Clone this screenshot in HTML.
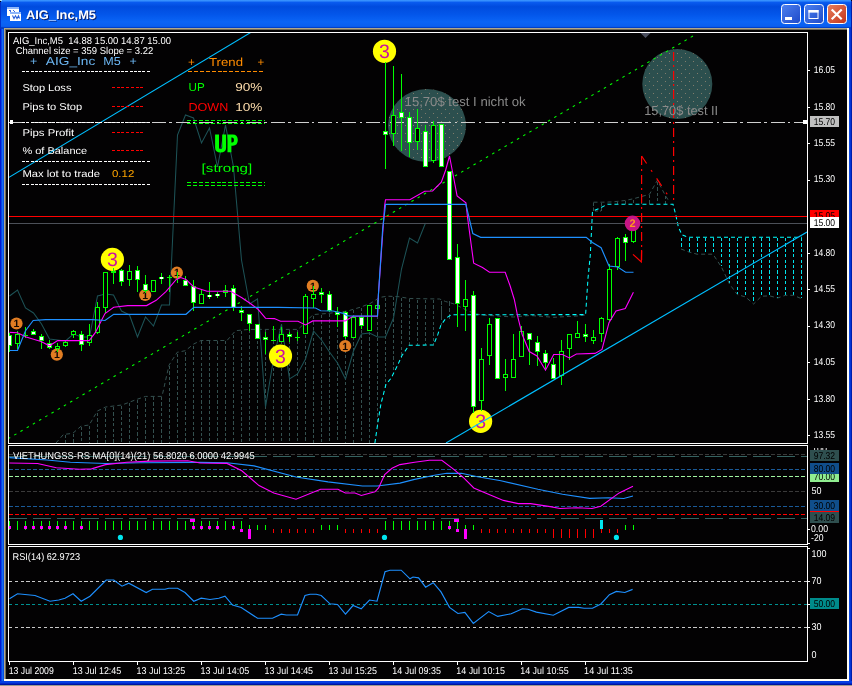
<!DOCTYPE html><html><head><meta charset="utf-8"><title>AIG_Inc,M5</title>
<style>html,body{margin:0;padding:0;background:#000;overflow:hidden}svg{display:block;will-change:transform}text{font-family:"Liberation Sans",sans-serif;white-space:pre;text-rendering:geometricPrecision}</style></head><body>
<svg width="852" height="686" viewBox="0 0 852 686">
<defs>
<linearGradient id="tb" x1="0" y1="0" x2="0" y2="1">
<stop offset="0" stop-color="#3a96ff"/><stop offset="0.04" stop-color="#2f88fb"/><stop offset="0.07" stop-color="#0a5cf0"/><stop offset="0.23" stop-color="#004bde"/><stop offset="0.5" stop-color="#0356ea"/><stop offset="0.75" stop-color="#0a64f6"/><stop offset="0.91" stop-color="#0a5ff0"/><stop offset="0.95" stop-color="#0040c8"/><stop offset="1" stop-color="#003cc0"/>
</linearGradient>
<linearGradient id="bb" x1="0" y1="0" x2="1" y2="1"><stop offset="0" stop-color="#4e82f0"/><stop offset="1" stop-color="#1d49c8"/></linearGradient>
<linearGradient id="cb" x1="0" y1="0" x2="1" y2="1"><stop offset="0" stop-color="#e8805e"/><stop offset="1" stop-color="#c2331a"/></linearGradient>
<pattern id="dots" width="8" height="8" patternUnits="userSpaceOnUse"><rect width="8" height="8" fill="#2c4f4e"/><rect x="1" y="1" width="1" height="1" fill="#807c6c"/><rect x="5" y="5" width="1" height="1" fill="#807c6c"/></pattern>
<clipPath id="cm"><rect x="9" y="33" width="798" height="410"/></clipPath>
<clipPath id="c1"><rect x="9" y="446" width="798" height="98"/></clipPath>
<clipPath id="clip100"><rect x="808" y="448" width="40" height="2.2"/></clipPath>
<clipPath id="c2"><rect x="9" y="547" width="798" height="114"/></clipPath>
</defs>
<rect x="0" y="0" width="852" height="686" fill="#0a50e2" />
<rect x="0" y="0" width="852" height="29" fill="url(#tb)" />
<rect x="0" y="29" width="1" height="686" fill="#0019cf" />
<rect x="1" y="29" width="1" height="686" fill="#0a44e4" />
<rect x="2" y="29" width="1" height="686" fill="#166cee" />
<rect x="3" y="29" width="1" height="686" fill="#0850e0" />
<rect x="0" y="0" width="1" height="29" fill="#0030c8" />
<rect x="849" y="29" width="1" height="686" fill="#0846e6" />
<rect x="850" y="29" width="1" height="686" fill="#0536d6" />
<rect x="851" y="0" width="1" height="686" fill="#001eaa" />
<rect x="0" y="681" width="852" height="2" fill="#063ee2" />
<rect x="0" y="683" width="852" height="1" fill="#0028c8" />
<rect x="0" y="684" width="852" height="1" fill="#0014a0" />
<rect x="0" y="685" width="852" height="1" fill="#9c9c90" />
<rect x="0" y="0" width="2" height="1" fill="#a8d8f8" />
<rect x="0" y="1" width="1" height="1" fill="#000820" />
<rect x="851" y="0" width="1" height="1" fill="#000010" />
<rect x="4" y="28" width="845" height="653" fill="#fffdf4" />
<rect x="4" y="28" width="843" height="651" fill="#b0a78c" />
<rect x="5" y="29" width="842" height="650" fill="#6e6856" />
<rect x="6" y="30" width="841" height="649" fill="#030203" />
<g shape-rendering="crispEdges">
<rect x="7" y="7" width="12" height="9" fill="#ffffff" />
<rect x="7" y="7" width="12" height="2" fill="#8fb6fa" />
<rect x="9" y="10" width="2" height="1" fill="#3a6be0" />
<rect x="10" y="11" width="1" height="1" fill="#3a6be0" />
<rect x="13" y="10" width="1" height="1" fill="#3a6be0" />
<rect x="14" y="11" width="1" height="1" fill="#3a6be0" />
<rect x="10" y="12" width="11" height="9" fill="#ffffff" />
<rect x="10" y="12" width="11" height="2" fill="#8fb6fa" />
</g>
<path d="M12.5 15.5 L14 18.5 L15.5 15.8 L17 18.6 L18.5 15.8 L19.5 18.5" stroke="#2a5fd8" stroke-width="1.1" fill="none"/>
<text x="27" y="20" font-size="12.5" fill="#0a1f66" textLength="70" lengthAdjust="spacingAndGlyphs" font-weight="bold" >AIG_Inc,M5</text>
<text x="26" y="19" font-size="12.5" fill="#ffffff" textLength="70" lengthAdjust="spacingAndGlyphs" font-weight="bold" >AIG_Inc,M5</text>
<rect x="781.5" y="4.5" width="19" height="19" rx="3" ry="3" fill="url(#bb)" stroke="#ffffff" stroke-width="1"/>
<rect x="804.5" y="4.5" width="19" height="19" rx="3" ry="3" fill="url(#bb)" stroke="#ffffff" stroke-width="1"/>
<rect x="827.5" y="4.5" width="19" height="19" rx="3" ry="3" fill="url(#cb)" stroke="#ffffff" stroke-width="1"/>
<rect x="785" y="17" width="7" height="3" fill="#fff" />
<rect x="809" y="10.5" width="9" height="8" fill="none" stroke="#fff" stroke-width="1"/>
<rect x="808.5" y="10" width="10" height="2.6" fill="#fff" />
<path d="M831.7 9.5 L841.7 19.3 M841.7 9.5 L831.7 19.3" stroke="#fff" stroke-width="2.2" fill="none"/>
<g shape-rendering="crispEdges" fill="none" stroke="#ffffff" stroke-width="1">
<rect x="8.5" y="32.5" width="799" height="411"/>
<rect x="8.5" y="445.5" width="799" height="99"/>
<rect x="8.5" y="546.5" width="799" height="115"/>
</g>
<g clip-path="url(#cm)">
<g shape-rendering="crispEdges">
<line x1="65.5" y1="435" x2="65.5" y2="443" stroke="#34504f" stroke-width="1" stroke-dasharray="3.2 2.2" />
<line x1="73.5" y1="434" x2="73.5" y2="443" stroke="#34504f" stroke-width="1" stroke-dasharray="3.2 2.2" />
<line x1="81.5" y1="427" x2="81.5" y2="443" stroke="#34504f" stroke-width="1" stroke-dasharray="3.2 2.2" />
<line x1="89.5" y1="426" x2="89.5" y2="443" stroke="#34504f" stroke-width="1" stroke-dasharray="3.2 2.2" />
<line x1="97.5" y1="413" x2="97.5" y2="443" stroke="#34504f" stroke-width="1" stroke-dasharray="3.2 2.2" />
<line x1="105.5" y1="408" x2="105.5" y2="443" stroke="#34504f" stroke-width="1" stroke-dasharray="3.2 2.2" />
<line x1="113.5" y1="407" x2="113.5" y2="443" stroke="#34504f" stroke-width="1" stroke-dasharray="3.2 2.2" />
<line x1="121.5" y1="406" x2="121.5" y2="443" stroke="#34504f" stroke-width="1" stroke-dasharray="3.2 2.2" />
<line x1="129.5" y1="403" x2="129.5" y2="443" stroke="#34504f" stroke-width="1" stroke-dasharray="3.2 2.2" />
<line x1="137.5" y1="400" x2="137.5" y2="443" stroke="#34504f" stroke-width="1" stroke-dasharray="3.2 2.2" />
<line x1="145.5" y1="398" x2="145.5" y2="443" stroke="#34504f" stroke-width="1" stroke-dasharray="3.2 2.2" />
<line x1="153.5" y1="397" x2="153.5" y2="443" stroke="#34504f" stroke-width="1" stroke-dasharray="3.2 2.2" />
<line x1="161.5" y1="397" x2="161.5" y2="443" stroke="#34504f" stroke-width="1" stroke-dasharray="3.2 2.2" />
<line x1="169.5" y1="366" x2="169.5" y2="443" stroke="#34504f" stroke-width="1" stroke-dasharray="3.2 2.2" />
<line x1="177.5" y1="354" x2="177.5" y2="443" stroke="#34504f" stroke-width="1" stroke-dasharray="3.2 2.2" />
<line x1="185.5" y1="352" x2="185.5" y2="443" stroke="#34504f" stroke-width="1" stroke-dasharray="3.2 2.2" />
<line x1="193.5" y1="346" x2="193.5" y2="443" stroke="#34504f" stroke-width="1" stroke-dasharray="3.2 2.2" />
<line x1="201.5" y1="341" x2="201.5" y2="443" stroke="#34504f" stroke-width="1" stroke-dasharray="3.2 2.2" />
<line x1="209.5" y1="341" x2="209.5" y2="443" stroke="#34504f" stroke-width="1" stroke-dasharray="3.2 2.2" />
<line x1="217.5" y1="341" x2="217.5" y2="443" stroke="#34504f" stroke-width="1" stroke-dasharray="3.2 2.2" />
<line x1="225.5" y1="341" x2="225.5" y2="443" stroke="#34504f" stroke-width="1" stroke-dasharray="3.2 2.2" />
<line x1="233.5" y1="335" x2="233.5" y2="443" stroke="#34504f" stroke-width="1" stroke-dasharray="3.2 2.2" />
<line x1="241.5" y1="331" x2="241.5" y2="443" stroke="#34504f" stroke-width="1" stroke-dasharray="3.2 2.2" />
<line x1="249.5" y1="330" x2="249.5" y2="443" stroke="#34504f" stroke-width="1" stroke-dasharray="3.2 2.2" />
<line x1="257.5" y1="330" x2="257.5" y2="443" stroke="#34504f" stroke-width="1" stroke-dasharray="3.2 2.2" />
<line x1="265.5" y1="330" x2="265.5" y2="443" stroke="#34504f" stroke-width="1" stroke-dasharray="3.2 2.2" />
<line x1="273.5" y1="330" x2="273.5" y2="443" stroke="#34504f" stroke-width="1" stroke-dasharray="3.2 2.2" />
<line x1="281.5" y1="330" x2="281.5" y2="443" stroke="#34504f" stroke-width="1" stroke-dasharray="3.2 2.2" />
<line x1="289.5" y1="330" x2="289.5" y2="443" stroke="#34504f" stroke-width="1" stroke-dasharray="3.2 2.2" />
<line x1="297.5" y1="330" x2="297.5" y2="443" stroke="#34504f" stroke-width="1" stroke-dasharray="3.2 2.2" />
<line x1="305.5" y1="324" x2="305.5" y2="443" stroke="#34504f" stroke-width="1" stroke-dasharray="3.2 2.2" />
<line x1="313.5" y1="316" x2="313.5" y2="443" stroke="#34504f" stroke-width="1" stroke-dasharray="3.2 2.2" />
<line x1="321.5" y1="315" x2="321.5" y2="443" stroke="#34504f" stroke-width="1" stroke-dasharray="3.2 2.2" />
<line x1="329.5" y1="314" x2="329.5" y2="443" stroke="#34504f" stroke-width="1" stroke-dasharray="3.2 2.2" />
<line x1="337.5" y1="313" x2="337.5" y2="443" stroke="#34504f" stroke-width="1" stroke-dasharray="3.2 2.2" />
<line x1="345.5" y1="312" x2="345.5" y2="443" stroke="#34504f" stroke-width="1" stroke-dasharray="3.2 2.2" />
<line x1="353.5" y1="310" x2="353.5" y2="443" stroke="#34504f" stroke-width="1" stroke-dasharray="3.2 2.2" />
<line x1="361.5" y1="308" x2="361.5" y2="443" stroke="#34504f" stroke-width="1" stroke-dasharray="3.2 2.2" />
<line x1="369.5" y1="305" x2="369.5" y2="443" stroke="#34504f" stroke-width="1" stroke-dasharray="3.2 2.2" />
<line x1="377.5" y1="300" x2="377.5" y2="429" stroke="#34504f" stroke-width="1" stroke-dasharray="3.2 2.2" />
<line x1="385.5" y1="298" x2="385.5" y2="388" stroke="#34504f" stroke-width="1" stroke-dasharray="3.2 2.2" />
<line x1="393.5" y1="297" x2="393.5" y2="374" stroke="#34504f" stroke-width="1" stroke-dasharray="3.2 2.2" />
<line x1="401.5" y1="298" x2="401.5" y2="358" stroke="#34504f" stroke-width="1" stroke-dasharray="3.2 2.2" />
<line x1="409.5" y1="299" x2="409.5" y2="345" stroke="#34504f" stroke-width="1" stroke-dasharray="3.2 2.2" />
<line x1="417.5" y1="300" x2="417.5" y2="345" stroke="#34504f" stroke-width="1" stroke-dasharray="3.2 2.2" />
<line x1="425.5" y1="300" x2="425.5" y2="345" stroke="#34504f" stroke-width="1" stroke-dasharray="3.2 2.2" />
<line x1="433.5" y1="300" x2="433.5" y2="345" stroke="#34504f" stroke-width="1" stroke-dasharray="3.2 2.2" />
<line x1="441.5" y1="301" x2="441.5" y2="325" stroke="#34504f" stroke-width="1" stroke-dasharray="3.2 2.2" />
<line x1="449.5" y1="303" x2="449.5" y2="316" stroke="#34504f" stroke-width="1" stroke-dasharray="3.2 2.2" />
<line x1="457.5" y1="306" x2="457.5" y2="315" stroke="#34504f" stroke-width="1" stroke-dasharray="3.2 2.2" />
<line x1="465.5" y1="310" x2="465.5" y2="315" stroke="#34504f" stroke-width="1" stroke-dasharray="3.2 2.2" />
<line x1="473.5" y1="314" x2="473.5" y2="315" stroke="#34504f" stroke-width="1" stroke-dasharray="3.2 2.2" />
<line x1="441.5" y1="301" x2="441.5" y2="320" stroke="#34504f" stroke-width="1" stroke-dasharray="4 3" />
<line x1="449.5" y1="301" x2="449.5" y2="320" stroke="#34504f" stroke-width="1" stroke-dasharray="4 3" />
<line x1="617.5" y1="202" x2="617.5" y2="204" stroke="#34504f" stroke-width="1" stroke-dasharray="3.2 2.2" />
<line x1="625.5" y1="201" x2="625.5" y2="204" stroke="#34504f" stroke-width="1" stroke-dasharray="3.2 2.2" />
<line x1="633.5" y1="200" x2="633.5" y2="204" stroke="#34504f" stroke-width="1" stroke-dasharray="3.2 2.2" />
<line x1="641.5" y1="198" x2="641.5" y2="204" stroke="#34504f" stroke-width="1" stroke-dasharray="3.2 2.2" />
<line x1="649.5" y1="195" x2="649.5" y2="204" stroke="#34504f" stroke-width="1" stroke-dasharray="3.2 2.2" />
<line x1="657.5" y1="182" x2="657.5" y2="204" stroke="#34504f" stroke-width="1" stroke-dasharray="3.2 2.2" />
<line x1="665.5" y1="196" x2="665.5" y2="204" stroke="#34504f" stroke-width="1" stroke-dasharray="3.2 2.2" />
<line x1="593.5" y1="203" x2="593.5" y2="211" stroke="#34504f" stroke-width="1" stroke-dasharray="3 2" />
<line x1="601.5" y1="203" x2="601.5" y2="211" stroke="#34504f" stroke-width="1" stroke-dasharray="3 2" />
<line x1="681.5" y1="238" x2="681.5" y2="249" stroke="#00e5ee" stroke-width="1" stroke-dasharray="3.2 2.2" />
<line x1="689.5" y1="238" x2="689.5" y2="252" stroke="#00e5ee" stroke-width="1" stroke-dasharray="3.2 2.2" />
<line x1="697.5" y1="238" x2="697.5" y2="254" stroke="#00e5ee" stroke-width="1" stroke-dasharray="3.2 2.2" />
<line x1="705.5" y1="238" x2="705.5" y2="254" stroke="#00e5ee" stroke-width="1" stroke-dasharray="3.2 2.2" />
<line x1="713.5" y1="238" x2="713.5" y2="254" stroke="#00e5ee" stroke-width="1" stroke-dasharray="3.2 2.2" />
<line x1="721.5" y1="238" x2="721.5" y2="266" stroke="#00e5ee" stroke-width="1" stroke-dasharray="3.2 2.2" />
<line x1="729.5" y1="238" x2="729.5" y2="283" stroke="#00e5ee" stroke-width="1" stroke-dasharray="3.2 2.2" />
<line x1="737.5" y1="238" x2="737.5" y2="294" stroke="#00e5ee" stroke-width="1" stroke-dasharray="3.2 2.2" />
<line x1="745.5" y1="238" x2="745.5" y2="297" stroke="#00e5ee" stroke-width="1" stroke-dasharray="3.2 2.2" />
<line x1="753.5" y1="238" x2="753.5" y2="303" stroke="#00e5ee" stroke-width="1" stroke-dasharray="3.2 2.2" />
<line x1="761.5" y1="238" x2="761.5" y2="297" stroke="#00e5ee" stroke-width="1" stroke-dasharray="3.2 2.2" />
<line x1="769.5" y1="238" x2="769.5" y2="296" stroke="#00e5ee" stroke-width="1" stroke-dasharray="3.2 2.2" />
<line x1="777.5" y1="238" x2="777.5" y2="298" stroke="#00e5ee" stroke-width="1" stroke-dasharray="3.2 2.2" />
<line x1="785.5" y1="238" x2="785.5" y2="295" stroke="#00e5ee" stroke-width="1" stroke-dasharray="3.2 2.2" />
<line x1="793.5" y1="238" x2="793.5" y2="295" stroke="#00e5ee" stroke-width="1" stroke-dasharray="3.2 2.2" />
<line x1="801.5" y1="238" x2="801.5" y2="298" stroke="#00e5ee" stroke-width="1" stroke-dasharray="3.2 2.2" />
</g>
<polyline points="56.0,443.0 63.4,434.5 72.8,433.3 81.0,426.2 89.2,425.0 97.4,411.0 105.6,407.0 122.0,405.0 137.3,399.2 145.5,396.4 162.0,396.4 169.0,365.2 177.2,352.3 185.4,350.7 193.7,344.0 201.0,340.5 227.0,340.5 235.6,330.7 249.0,329.4 298.0,329.4 305.9,322.0 313.0,314.6 328.0,313.4 337.9,312.2 347.7,311.0 360.0,307.3 370.0,303.6 379.8,297.4 387.2,296.2 398.0,296.6 409.3,298.5 439.6,299.0 445.3,301.4 454.8,304.2 466.2,310.0 473.7,313.3 482.0,315.0 513.5,317.0 530.0,315.5 553.7,317.3 577.0,316.0 585.0,315.0" fill="none" stroke="#34504f" stroke-width="1" stroke-dasharray="4 3" />
<polyline points="593.5,202.2 602.2,202.2 612.7,201.9 625.0,200.5 633.7,198.7 649.5,194.3 657.3,180.3 665.2,195.2 669.6,202.2" fill="none" stroke="#34504f" stroke-width="1" stroke-dasharray="4 3" />
<polyline points="593.5,202.5 593.5,211.0 601.0,211.0" fill="none" stroke="#34504f" stroke-width="1" stroke-dasharray="3 2" />
<polyline points="681.0,249.0 689.0,252.0 697.0,254.2 713.0,254.2 721.6,267.3 729.5,284.0 737.3,294.5 745.6,297.0 753.6,304.0 761.5,296.2 769.7,295.9 777.6,298.0 785.4,295.3 793.6,295.3 801.7,298.8" fill="none" stroke="#34504f" stroke-width="1" stroke-dasharray="4 3" />
<polyline points="374.9,443.0 378.5,418.4 381.0,403.6 385.9,384.6 391.1,378.2 397.5,365.5 401.7,356.0 409.1,345.3 433.4,345.0 437.7,334.9 440.8,325.4 446.1,318.0 451.4,314.8 585.6,314.6 588.0,278.3 590.3,255.0 592.4,212.7 593.0,211.0 600.0,208.0 607.5,204.3 673.0,204.3 675.7,214.5 678.3,226.7 681.8,234.6 688.0,237.3 802.0,237.3" fill="none" stroke="#00ffff" stroke-width="1.05" stroke-dasharray="4 3" />
<polyline points="9.5,296.0 17.5,290.0 25.5,308.0 33.5,313.0 41.5,324.0 49.5,339.0 57.5,340.0 65.5,341.0 73.5,334.0 81.5,337.0 89.5,337.0 97.5,296.0 105.5,294.0 113.5,295.0 121.5,311.0 129.5,315.0 137.5,337.0 145.5,317.0 153.5,326.0 161.5,305.0 169.5,305.0 177.5,135.0 185.5,115.0 193.5,118.0 201.5,143.0 209.5,128.0 217.5,167.0 225.5,125.0 233.5,167.0 241.5,260.0 249.5,304.0 257.5,299.0 265.5,407.0 273.5,359.0 281.5,324.0 289.5,379.0 297.5,374.0 305.5,359.0 313.5,331.0 321.5,340.0 329.5,352.0 337.5,363.0 345.5,379.0 353.5,351.0 361.5,334.0 369.5,333.0 377.5,337.0 385.5,337.0 393.5,318.0 401.5,269.0 409.5,238.0 417.5,243.0 425.5,223.0" fill="none" stroke="#1d5256" stroke-width="1.05" />
<ellipse cx="427" cy="125.5" rx="39" ry="36.5" fill="url(#dots)"/>
<ellipse cx="677.3" cy="84" rx="35" ry="35" fill="url(#dots)"/>
<g shape-rendering="crispEdges">
<line x1="9" y1="122.5" x2="807" y2="122.5" stroke="#d0d0d0" stroke-width="1" stroke-dasharray="14 3.4 2.4 4" />
<line x1="9" y1="216.5" x2="807" y2="216.5" stroke="#ff0000" stroke-width="1.3" />
<line x1="9" y1="223.5" x2="807" y2="223.5" stroke="#4c5058" stroke-width="1" />
</g>
<rect x="10" y="120" width="3" height="4" fill="#ffffff" />
<rect x="803" y="120" width="4" height="4" fill="#ffffff" />
<line x1="8" y1="438.8" x2="695.2" y2="34.7" stroke="#00ff00" stroke-width="1.05" stroke-dasharray="2.6 4.6" />
<line x1="9" y1="177.4" x2="252" y2="31.7" stroke="#00bfff" stroke-width="1.1" />
<line x1="673.6" y1="52" x2="673.6" y2="204" stroke="#ff0000" stroke-width="1.2" stroke-dasharray="9 4 2 4" />
<line x1="641.6" y1="156" x2="641.6" y2="262" stroke="#ff0000" stroke-width="1.2" stroke-dasharray="9 4 2 4" />
<line x1="641.6" y1="156" x2="669.6" y2="197.8" stroke="#ff0000" stroke-width="1.2" stroke-dasharray="9 8 2 8" />
<polyline points="633.0,254.4 641.3,262.0 641.6,250.0" fill="none" stroke="#ff0000" stroke-width="1.2" />
<circle cx="16.5" cy="323.5" r="6.1" fill="#e17d23"/>
<text x="16.5" y="327.2" font-size="10.5" fill="#140800" font-weight="bold" text-anchor="middle" >1</text>
<circle cx="56.8" cy="354.6" r="6.1" fill="#e17d23"/>
<text x="56.8" y="358.3" font-size="10.5" fill="#140800" font-weight="bold" text-anchor="middle" >1</text>
<circle cx="145.2" cy="295" r="6.1" fill="#e17d23"/>
<text x="145.2" y="298.7" font-size="10.5" fill="#140800" font-weight="bold" text-anchor="middle" >1</text>
<circle cx="176.9" cy="272.7" r="6.1" fill="#e17d23"/>
<text x="176.9" y="276.4" font-size="10.5" fill="#140800" font-weight="bold" text-anchor="middle" >1</text>
<circle cx="312.8" cy="285.9" r="6.1" fill="#e17d23"/>
<text x="312.8" y="289.59999999999997" font-size="10.5" fill="#140800" font-weight="bold" text-anchor="middle" >1</text>
<circle cx="345.2" cy="346" r="6.1" fill="#e17d23"/>
<text x="345.2" y="349.7" font-size="10.5" fill="#140800" font-weight="bold" text-anchor="middle" >1</text>
<circle cx="112.4" cy="259.4" r="11.6" fill="#ffff00"/>
<text x="112.4" y="266.4" font-size="19.5" fill="#cc10a0" text-anchor="middle" >3</text>
<circle cx="280.5" cy="356" r="11.6" fill="#ffff00"/>
<text x="280.5" y="363" font-size="19.5" fill="#cc10a0" text-anchor="middle" >3</text>
<circle cx="384.5" cy="51.3" r="11.6" fill="#ffff00"/>
<text x="384.5" y="58.3" font-size="19.5" fill="#cc10a0" text-anchor="middle" >3</text>
<circle cx="480.6" cy="421.3" r="11.6" fill="#ffff00"/>
<text x="480.6" y="428.3" font-size="19.5" fill="#cc10a0" text-anchor="middle" >3</text>
<g shape-rendering="crispEdges">
<rect x="9" y="333" width="1" height="19" fill="#00ff00" />
<rect x="7" y="335" width="5" height="11" fill="#00ff00" />
<rect x="8" y="336" width="3" height="9" fill="#ffffff" />
<rect x="17" y="331" width="1" height="18" fill="#00ff00" />
<rect x="15" y="334" width="5" height="10" fill="#00ff00" />
<rect x="16" y="335" width="3" height="8" fill="#000000" />
<rect x="25" y="327" width="1" height="11" fill="#00ff00" />
<rect x="23" y="335" width="5" height="1" fill="#00ff00" />
<rect x="33" y="329" width="1" height="6" fill="#00ff00" />
<rect x="31" y="331" width="5" height="4" fill="#00ff00" />
<rect x="32" y="332" width="3" height="2" fill="#ffffff" />
<rect x="41" y="334" width="1" height="15" fill="#00ff00" />
<rect x="39" y="336" width="5" height="5" fill="#00ff00" />
<rect x="40" y="337" width="3" height="3" fill="#ffffff" />
<rect x="49" y="340" width="1" height="9" fill="#00ff00" />
<rect x="47" y="343" width="5" height="5" fill="#00ff00" />
<rect x="48" y="344" width="3" height="3" fill="#ffffff" />
<rect x="57" y="343" width="1" height="9" fill="#00ff00" />
<rect x="55" y="346" width="5" height="3" fill="#00ff00" />
<rect x="56" y="347" width="3" height="1" fill="#000000" />
<rect x="65" y="341" width="1" height="6" fill="#00ff00" />
<rect x="63" y="342" width="5" height="4" fill="#00ff00" />
<rect x="64" y="343" width="3" height="2" fill="#000000" />
<rect x="73" y="330" width="1" height="8" fill="#00ff00" />
<rect x="71" y="331" width="5" height="4" fill="#00ff00" />
<rect x="72" y="332" width="3" height="2" fill="#000000" />
<rect x="81" y="331" width="1" height="20" fill="#00ff00" />
<rect x="79" y="334" width="5" height="11" fill="#00ff00" />
<rect x="80" y="335" width="3" height="9" fill="#ffffff" />
<rect x="89" y="324" width="1" height="22" fill="#00ff00" />
<rect x="87" y="335" width="5" height="8" fill="#00ff00" />
<rect x="88" y="336" width="3" height="6" fill="#000000" />
<rect x="97" y="302" width="1" height="32" fill="#00ff00" />
<rect x="95" y="307" width="5" height="26" fill="#00ff00" />
<rect x="96" y="308" width="3" height="24" fill="#000000" />
<rect x="105" y="272" width="1" height="41" fill="#00ff00" />
<rect x="103" y="272" width="5" height="36" fill="#00ff00" />
<rect x="104" y="273" width="3" height="34" fill="#000000" />
<rect x="113" y="268" width="1" height="16" fill="#00ff00" />
<rect x="111" y="271" width="5" height="2" fill="#00ff00" />
<rect x="121" y="269" width="1" height="17" fill="#00ff00" />
<rect x="119" y="270" width="5" height="12" fill="#00ff00" />
<rect x="120" y="271" width="3" height="10" fill="#ffffff" />
<rect x="129" y="265" width="1" height="21" fill="#00ff00" />
<rect x="127" y="271" width="5" height="9" fill="#00ff00" />
<rect x="128" y="272" width="3" height="7" fill="#000000" />
<rect x="137" y="266" width="1" height="26" fill="#00ff00" />
<rect x="135" y="270" width="5" height="10" fill="#00ff00" />
<rect x="136" y="271" width="3" height="8" fill="#ffffff" />
<rect x="145" y="275" width="1" height="18" fill="#00ff00" />
<rect x="143" y="284" width="5" height="7" fill="#00ff00" />
<rect x="144" y="285" width="3" height="5" fill="#ffffff" />
<rect x="153" y="280" width="1" height="12" fill="#00ff00" />
<rect x="151" y="280" width="5" height="12" fill="#00ff00" />
<rect x="152" y="281" width="3" height="10" fill="#000000" />
<rect x="161" y="273" width="1" height="11" fill="#00ff00" />
<rect x="159" y="277" width="5" height="2" fill="#00ff00" />
<rect x="160" y="277" width="3" height="2" fill="#ffffff" />
<rect x="169" y="275" width="1" height="17" fill="#00ff00" />
<rect x="167" y="277" width="5" height="1" fill="#00ff00" />
<rect x="177" y="272" width="1" height="11" fill="#00ff00" />
<rect x="185" y="276" width="1" height="10" fill="#00ff00" />
<rect x="183" y="280" width="5" height="6" fill="#00ff00" />
<rect x="184" y="281" width="3" height="4" fill="#ffffff" />
<rect x="193" y="280" width="1" height="31" fill="#00ff00" />
<rect x="191" y="286" width="5" height="17" fill="#00ff00" />
<rect x="192" y="287" width="3" height="15" fill="#ffffff" />
<rect x="201" y="289" width="1" height="15" fill="#00ff00" />
<rect x="199" y="294" width="5" height="10" fill="#00ff00" />
<rect x="200" y="295" width="3" height="8" fill="#000000" />
<rect x="209" y="282" width="1" height="17" fill="#00ff00" />
<rect x="207" y="295" width="5" height="2" fill="#00ff00" />
<rect x="208" y="295" width="3" height="2" fill="#ffffff" />
<rect x="217" y="292" width="1" height="6" fill="#00ff00" />
<rect x="215" y="294" width="5" height="2" fill="#00ff00" />
<rect x="216" y="294" width="3" height="2" fill="#ffffff" />
<rect x="225" y="285" width="1" height="12" fill="#00ff00" />
<rect x="223" y="290" width="5" height="3" fill="#00ff00" />
<rect x="224" y="291" width="3" height="1" fill="#000000" />
<rect x="233" y="285" width="1" height="26" fill="#00ff00" />
<rect x="231" y="288" width="5" height="20" fill="#00ff00" />
<rect x="232" y="289" width="3" height="18" fill="#ffffff" />
<rect x="241" y="306" width="1" height="15" fill="#00ff00" />
<rect x="239" y="310" width="5" height="3" fill="#00ff00" />
<rect x="240" y="311" width="3" height="1" fill="#ffffff" />
<rect x="249" y="314" width="1" height="17" fill="#00ff00" />
<rect x="247" y="314" width="5" height="10" fill="#00ff00" />
<rect x="248" y="315" width="3" height="8" fill="#ffffff" />
<rect x="257" y="324" width="1" height="15" fill="#00ff00" />
<rect x="255" y="324" width="5" height="15" fill="#00ff00" />
<rect x="256" y="325" width="3" height="13" fill="#ffffff" />
<rect x="265" y="332" width="1" height="22" fill="#00ff00" />
<rect x="263" y="337" width="5" height="3" fill="#00ff00" />
<rect x="264" y="338" width="3" height="1" fill="#ffffff" />
<rect x="273" y="326" width="1" height="15" fill="#00ff00" />
<rect x="271" y="340" width="5" height="1" fill="#00ff00" />
<rect x="281" y="327" width="1" height="15" fill="#00ff00" />
<rect x="279" y="334" width="5" height="8" fill="#00ff00" />
<rect x="280" y="335" width="3" height="6" fill="#000000" />
<rect x="289" y="332" width="1" height="10" fill="#00ff00" />
<rect x="287" y="334" width="5" height="3" fill="#00ff00" />
<rect x="288" y="335" width="3" height="1" fill="#ffffff" />
<rect x="297" y="332" width="1" height="9" fill="#00ff00" />
<rect x="295" y="337" width="5" height="1" fill="#00ff00" />
<rect x="305" y="294" width="1" height="40" fill="#00ff00" />
<rect x="303" y="296" width="5" height="38" fill="#00ff00" />
<rect x="304" y="297" width="3" height="36" fill="#000000" />
<rect x="313" y="286" width="1" height="22" fill="#00ff00" />
<rect x="311" y="294" width="5" height="5" fill="#00ff00" />
<rect x="312" y="295" width="3" height="3" fill="#000000" />
<rect x="321" y="288" width="1" height="15" fill="#00ff00" />
<rect x="319" y="292" width="5" height="3" fill="#00ff00" />
<rect x="320" y="293" width="3" height="1" fill="#ffffff" />
<rect x="329" y="291" width="1" height="21" fill="#00ff00" />
<rect x="327" y="294" width="5" height="17" fill="#00ff00" />
<rect x="328" y="295" width="3" height="15" fill="#ffffff" />
<rect x="337" y="307" width="1" height="20" fill="#00ff00" />
<rect x="335" y="312" width="5" height="3" fill="#00ff00" />
<rect x="336" y="313" width="3" height="1" fill="#ffffff" />
<rect x="345" y="311" width="1" height="28" fill="#00ff00" />
<rect x="343" y="312" width="5" height="25" fill="#00ff00" />
<rect x="344" y="313" width="3" height="23" fill="#ffffff" />
<rect x="353" y="317" width="1" height="21" fill="#00ff00" />
<rect x="351" y="317" width="5" height="21" fill="#00ff00" />
<rect x="352" y="318" width="3" height="19" fill="#000000" />
<rect x="361" y="317" width="1" height="12" fill="#00ff00" />
<rect x="359" y="317" width="5" height="9" fill="#00ff00" />
<rect x="360" y="318" width="3" height="7" fill="#ffffff" />
<rect x="369" y="305" width="1" height="26" fill="#00ff00" />
<rect x="367" y="305" width="5" height="26" fill="#00ff00" />
<rect x="368" y="306" width="3" height="24" fill="#000000" />
<rect x="377" y="300" width="1" height="9" fill="#00ff00" />
<rect x="375" y="305" width="5" height="4" fill="#00ff00" />
<rect x="376" y="306" width="3" height="2" fill="#000000" />
<rect x="385" y="62" width="1" height="107" fill="#00ff00" />
<rect x="383" y="131" width="5" height="4" fill="#00ff00" />
<rect x="384" y="132" width="3" height="2" fill="#ffffff" />
<rect x="393" y="66" width="1" height="80" fill="#00ff00" />
<rect x="391" y="115" width="5" height="19" fill="#00ff00" />
<rect x="392" y="116" width="3" height="17" fill="#000000" />
<rect x="401" y="74" width="1" height="77" fill="#00ff00" />
<rect x="399" y="112" width="5" height="6" fill="#00ff00" />
<rect x="400" y="113" width="3" height="4" fill="#ffffff" />
<rect x="409" y="112" width="1" height="45" fill="#00ff00" />
<rect x="407" y="117" width="5" height="26" fill="#00ff00" />
<rect x="408" y="118" width="3" height="24" fill="#ffffff" />
<rect x="417" y="109" width="1" height="41" fill="#00ff00" />
<rect x="415" y="128" width="5" height="14" fill="#00ff00" />
<rect x="416" y="129" width="3" height="12" fill="#000000" />
<rect x="425" y="125" width="1" height="42" fill="#00ff00" />
<rect x="423" y="131" width="5" height="36" fill="#00ff00" />
<rect x="424" y="132" width="3" height="34" fill="#ffffff" />
<rect x="433" y="121" width="1" height="42" fill="#00ff00" />
<rect x="431" y="125" width="5" height="36" fill="#00ff00" />
<rect x="432" y="126" width="3" height="34" fill="#000000" />
<rect x="441" y="124" width="1" height="43" fill="#00ff00" />
<rect x="439" y="124" width="5" height="43" fill="#00ff00" />
<rect x="440" y="125" width="3" height="41" fill="#ffffff" />
<rect x="449" y="171" width="1" height="89" fill="#00ff00" />
<rect x="447" y="171" width="5" height="89" fill="#00ff00" />
<rect x="448" y="172" width="3" height="87" fill="#ffffff" />
<rect x="457" y="244" width="1" height="83" fill="#00ff00" />
<rect x="455" y="257" width="5" height="47" fill="#00ff00" />
<rect x="456" y="258" width="3" height="45" fill="#ffffff" />
<rect x="465" y="280" width="1" height="51" fill="#00ff00" />
<rect x="463" y="299" width="5" height="8" fill="#00ff00" />
<rect x="464" y="300" width="3" height="6" fill="#000000" />
<rect x="473" y="291" width="1" height="122" fill="#00ff00" />
<rect x="471" y="295" width="5" height="112" fill="#00ff00" />
<rect x="472" y="296" width="3" height="110" fill="#ffffff" />
<rect x="481" y="348" width="1" height="63" fill="#00ff00" />
<rect x="479" y="359" width="5" height="42" fill="#00ff00" />
<rect x="480" y="360" width="3" height="40" fill="#000000" />
<rect x="489" y="318" width="1" height="47" fill="#00ff00" />
<rect x="487" y="324" width="5" height="32" fill="#00ff00" />
<rect x="488" y="325" width="3" height="30" fill="#000000" />
<rect x="497" y="318" width="1" height="61" fill="#00ff00" />
<rect x="495" y="318" width="5" height="61" fill="#00ff00" />
<rect x="496" y="319" width="3" height="59" fill="#ffffff" />
<rect x="505" y="359" width="1" height="32" fill="#00ff00" />
<rect x="503" y="374" width="5" height="4" fill="#00ff00" />
<rect x="504" y="375" width="3" height="2" fill="#000000" />
<rect x="513" y="334" width="1" height="44" fill="#00ff00" />
<rect x="511" y="359" width="5" height="19" fill="#00ff00" />
<rect x="512" y="360" width="3" height="17" fill="#000000" />
<rect x="521" y="326" width="1" height="31" fill="#00ff00" />
<rect x="519" y="331" width="5" height="26" fill="#00ff00" />
<rect x="520" y="332" width="3" height="24" fill="#000000" />
<rect x="529" y="333" width="1" height="32" fill="#00ff00" />
<rect x="527" y="333" width="5" height="7" fill="#00ff00" />
<rect x="528" y="334" width="3" height="5" fill="#ffffff" />
<rect x="537" y="336" width="1" height="30" fill="#00ff00" />
<rect x="535" y="342" width="5" height="10" fill="#00ff00" />
<rect x="536" y="343" width="3" height="8" fill="#ffffff" />
<rect x="545" y="350" width="1" height="20" fill="#00ff00" />
<rect x="543" y="353" width="5" height="10" fill="#00ff00" />
<rect x="544" y="354" width="3" height="8" fill="#ffffff" />
<rect x="553" y="358" width="1" height="21" fill="#00ff00" />
<rect x="551" y="364" width="5" height="15" fill="#00ff00" />
<rect x="552" y="365" width="3" height="13" fill="#ffffff" />
<rect x="561" y="340" width="1" height="45" fill="#00ff00" />
<rect x="559" y="351" width="5" height="25" fill="#00ff00" />
<rect x="560" y="352" width="3" height="23" fill="#000000" />
<rect x="569" y="334" width="1" height="26" fill="#00ff00" />
<rect x="567" y="334" width="5" height="15" fill="#00ff00" />
<rect x="568" y="335" width="3" height="13" fill="#000000" />
<rect x="577" y="321" width="1" height="17" fill="#00ff00" />
<rect x="575" y="333" width="5" height="5" fill="#00ff00" />
<rect x="576" y="334" width="3" height="3" fill="#000000" />
<rect x="585" y="324" width="1" height="18" fill="#00ff00" />
<rect x="583" y="334" width="5" height="3" fill="#00ff00" />
<rect x="584" y="335" width="3" height="1" fill="#ffffff" />
<rect x="593" y="330" width="1" height="14" fill="#00ff00" />
<rect x="591" y="337" width="5" height="4" fill="#00ff00" />
<rect x="592" y="338" width="3" height="2" fill="#000000" />
<rect x="601" y="317" width="1" height="25" fill="#00ff00" />
<rect x="599" y="318" width="5" height="16" fill="#00ff00" />
<rect x="600" y="319" width="3" height="14" fill="#000000" />
<rect x="609" y="264" width="1" height="57" fill="#00ff00" />
<rect x="607" y="269" width="5" height="51" fill="#00ff00" />
<rect x="608" y="270" width="3" height="49" fill="#000000" />
<rect x="617" y="237" width="1" height="33" fill="#00ff00" />
<rect x="615" y="238" width="5" height="29" fill="#00ff00" />
<rect x="616" y="239" width="3" height="27" fill="#000000" />
<rect x="625" y="234" width="1" height="27" fill="#00ff00" />
<rect x="623" y="237" width="5" height="6" fill="#00ff00" />
<rect x="624" y="238" width="3" height="4" fill="#ffffff" />
<rect x="633" y="222" width="1" height="21" fill="#00ff00" />
<rect x="631" y="223" width="5" height="19" fill="#00ff00" />
<rect x="632" y="224" width="3" height="17" fill="#000000" />
</g>
<polyline points="9.6,332.4 17.5,332.7 26.2,337.0 41.0,341.5 49.5,345.8 57.7,340.6 89.2,340.6 95.3,332.7 101.4,320.5 105.0,313.5 113.7,307.3 127.7,305.6 146.6,305.6 156.2,300.3 165.9,291.6 176.3,279.4 180.7,277.6 186.0,279.4 193.8,286.9 207.0,291.3 230.6,291.3 241.9,297.7 250.7,303.8 257.7,309.0 265.5,318.2 274.4,318.6 280.5,321.2 298.0,321.2 305.5,325.0 312.8,320.9 345.2,320.9 353.0,316.3 377.5,316.3 378.4,295.0 380.5,265.0 384.6,205.7 385.5,199.7 409.8,199.7 424.7,191.3 432.6,191.0 441.3,182.2 445.7,170.0 449.5,156.0 453.6,177.5 457.1,195.9 465.9,202.9 467.6,217.7 471.1,244.0 473.7,263.2 482.5,267.6 489.5,272.3 505.2,272.3 510.0,285.5 514.3,299.5 517.8,317.0 522.2,334.5 529.2,351.5 537.0,355.9 545.5,370.2 553.7,354.5 562.4,354.5 569.4,358.0 576.4,354.0 595.0,353.4 602.0,349.4 609.0,322.6 616.0,311.0 625.3,308.6 633.4,292.3" fill="none" stroke="#ff00ff" stroke-width="1.1" />
<polyline points="9.6,350.5 17.5,350.5 25.4,331.0 33.2,320.5 45.5,319.6 92.7,319.6 105.0,320.5 113.7,314.3 186.0,314.3 193.8,307.3 277.9,307.3 315.5,308.0 320.7,310.7 333.0,311.0 343.4,313.4 347.0,315.6 350.0,316.0 377.5,316.0 378.4,295.0 382.7,228.4 385.6,204.4 465.9,204.4 472.8,233.5 480.7,237.3 586.2,237.3 592.4,242.5 601.1,247.7 609.0,266.0 617.7,267.0 625.6,272.2 633.5,272.2" fill="none" stroke="#1e90ff" stroke-width="1.15" />
<circle cx="632.5" cy="223.4" r="7.8" fill="#c71585"/>
<text x="632.5" y="227.4" font-size="11" fill="#ff9a20" font-weight="bold" text-anchor="middle" >2</text>
<line x1="446" y1="443" x2="807" y2="232" stroke="#00bfff" stroke-width="1.1" />
<path d="M640.5 33 L650.5 33 L645.5 38 Z" fill="#4a4e5e"/>
</g>
<text x="13" y="44" font-size="9.9" fill="#ffffff" textLength="158" lengthAdjust="spacingAndGlyphs" >AIG_Inc,M5  14.88 15.00 14.87 15.00</text>
<text x="15.7" y="54" font-size="9.9" fill="#ffffff" textLength="137.5" lengthAdjust="spacingAndGlyphs" >Channel size = 359 Slope = 3.22</text>
<text x="30" y="65" font-size="11.6" fill="#6cb6f2" textLength="7.3" lengthAdjust="spacingAndGlyphs" >+</text>
<text x="45.8" y="65" font-size="11.6" fill="#6cb6f2" textLength="49.5" lengthAdjust="spacingAndGlyphs" >AIG_Inc</text>
<text x="103.2" y="65" font-size="11.6" fill="#6cb6f2" textLength="17.5" lengthAdjust="spacingAndGlyphs" >M5</text>
<text x="129.6" y="65" font-size="11.6" fill="#6cb6f2" textLength="7.3" lengthAdjust="spacingAndGlyphs" >+</text>
<text x="404.6" y="106" font-size="13" fill="#8a8a8a" textLength="121" lengthAdjust="spacingAndGlyphs" >15,70$ test I nicht ok</text>
<text x="644.2" y="114.8" font-size="13" fill="#8a8a8a" textLength="74" lengthAdjust="spacingAndGlyphs" >15,70$ test II</text>
<g shape-rendering="crispEdges">
<line x1="22" y1="71.5" x2="150" y2="71.5" stroke="#ffffff" stroke-width="1" stroke-dasharray="3 1.3" />
<line x1="22" y1="161.5" x2="150" y2="161.5" stroke="#ffffff" stroke-width="1" stroke-dasharray="3 1.3" />
<line x1="22" y1="184.5" x2="150" y2="184.5" stroke="#ffffff" stroke-width="1" stroke-dasharray="3 1.3" />
<line x1="22" y1="122.5" x2="150" y2="122.5" stroke="#ffffff" stroke-width="1" stroke-dasharray="3 1.3" />
<line x1="112" y1="87.5" x2="145" y2="87.5" stroke="#ff0000" stroke-width="1" stroke-dasharray="3 1.7" />
<line x1="112" y1="106.5" x2="145" y2="106.5" stroke="#ff0000" stroke-width="1" stroke-dasharray="3 1.7" />
<line x1="112" y1="132.5" x2="145" y2="132.5" stroke="#ff0000" stroke-width="1" stroke-dasharray="3 1.7" />
<line x1="112" y1="150.5" x2="145" y2="150.5" stroke="#ff0000" stroke-width="1" stroke-dasharray="3 1.7" />
<line x1="188" y1="71.5" x2="265" y2="71.5" stroke="#ff8c00" stroke-width="1" stroke-dasharray="4 1.9" />
<line x1="187" y1="120.5" x2="265" y2="120.5" stroke="#00ff00" stroke-width="1" stroke-dasharray="4 1.9" />
<line x1="187" y1="123.5" x2="265" y2="123.5" stroke="#00ff00" stroke-width="1" stroke-dasharray="4 1.9" />
<line x1="187" y1="182.5" x2="265" y2="182.5" stroke="#00ff00" stroke-width="1" stroke-dasharray="4 1.9" />
<line x1="187" y1="185.5" x2="265" y2="185.5" stroke="#00ff00" stroke-width="1" stroke-dasharray="4 1.9" />
</g>
<text x="22.4" y="91" font-size="9.9" fill="#ffffff" textLength="49" lengthAdjust="spacingAndGlyphs" >Stop Loss</text>
<text x="22.4" y="110" font-size="9.9" fill="#ffffff" textLength="59.7" lengthAdjust="spacingAndGlyphs" >Pips to Stop</text>
<text x="22.4" y="136" font-size="9.9" fill="#ffffff" textLength="51.8" lengthAdjust="spacingAndGlyphs" >Pips Profit</text>
<text x="22.4" y="154" font-size="9.9" fill="#ffffff" textLength="64.7" lengthAdjust="spacingAndGlyphs" >% of Balance</text>
<text x="22.4" y="177" font-size="9.9" fill="#ffffff" textLength="77.6" lengthAdjust="spacingAndGlyphs" >Max lot to trade</text>
<text x="112" y="177" font-size="9.9" fill="#ffa500" textLength="22.3" lengthAdjust="spacingAndGlyphs" >0.12</text>
<text x="188" y="66" font-size="11.6" fill="#ff8c00" >+</text>
<text x="209" y="66" font-size="11.6" fill="#ff8c00" textLength="34" lengthAdjust="spacingAndGlyphs" >Trend</text>
<text x="257.5" y="66" font-size="11.6" fill="#ff8c00" >+</text>
<text x="188.5" y="91" font-size="11.6" fill="#00ff00" textLength="16.2" lengthAdjust="spacingAndGlyphs" >UP</text>
<text x="235.2" y="91" font-size="11.6" fill="#ffdead" textLength="27.2" lengthAdjust="spacingAndGlyphs" >90%</text>
<text x="188.5" y="110.5" font-size="11.6" fill="#ff0000" textLength="39.8" lengthAdjust="spacingAndGlyphs" >DOWN</text>
<text x="235.2" y="110.5" font-size="11.6" fill="#ffdead" textLength="27.2" lengthAdjust="spacingAndGlyphs" >10%</text>
<path fill="#00ff00" fill-rule="evenodd" d="M215.1,134.5 h3.9 v13 q0,1.6 1.6,1.6 q1.6,0 1.6,-1.6 v-13 h3.9 v13.3 q0,4.8 -5.5,4.8 q-5.5,0 -5.5,-4.8 Z M227.5,134.5 h5.3 q5,0 5,5.6 q0,5.6 -5,5.6 h-1.4 v6.6 h-3.9 Z M231.4,137.6 v5 h0.8 q1.8,0 1.8,-2.5 q0,-2.5 -1.8,-2.5 Z"/>
<text x="201.6" y="172" font-size="11.6" fill="#00ff00" textLength="50.7" lengthAdjust="spacingAndGlyphs" >[strong]</text>
<g shape-rendering="crispEdges">
<rect x="808" y="70" width="2" height="1" fill="#fff" />
<rect x="808" y="107" width="2" height="1" fill="#fff" />
<rect x="808" y="143" width="2" height="1" fill="#fff" />
<rect x="808" y="180" width="2" height="1" fill="#fff" />
<rect x="808" y="253" width="2" height="1" fill="#fff" />
<rect x="808" y="289" width="2" height="1" fill="#fff" />
<rect x="808" y="326" width="2" height="1" fill="#fff" />
<rect x="808" y="362" width="2" height="1" fill="#fff" />
<rect x="808" y="399" width="2" height="1" fill="#fff" />
<rect x="808" y="435" width="2" height="1" fill="#fff" />
</g>
<text x="813.7" y="73" font-size="9.9" fill="#ffffff" textLength="21.4" lengthAdjust="spacingAndGlyphs" >16.05</text>
<text x="813.7" y="110" font-size="9.9" fill="#ffffff" textLength="21.4" lengthAdjust="spacingAndGlyphs" >15.80</text>
<text x="813.7" y="146" font-size="9.9" fill="#ffffff" textLength="21.4" lengthAdjust="spacingAndGlyphs" >15.55</text>
<text x="813.7" y="182" font-size="9.9" fill="#ffffff" textLength="21.4" lengthAdjust="spacingAndGlyphs" >15.30</text>
<text x="813.7" y="256" font-size="9.9" fill="#ffffff" textLength="21.4" lengthAdjust="spacingAndGlyphs" >14.80</text>
<text x="813.7" y="292" font-size="9.9" fill="#ffffff" textLength="21.4" lengthAdjust="spacingAndGlyphs" >14.55</text>
<text x="813.7" y="328" font-size="9.9" fill="#ffffff" textLength="21.4" lengthAdjust="spacingAndGlyphs" >14.30</text>
<text x="813.7" y="365" font-size="9.9" fill="#ffffff" textLength="21.4" lengthAdjust="spacingAndGlyphs" >14.05</text>
<text x="813.7" y="402" font-size="9.9" fill="#ffffff" textLength="21.4" lengthAdjust="spacingAndGlyphs" >13.80</text>
<text x="813.7" y="438" font-size="9.9" fill="#ffffff" textLength="21.4" lengthAdjust="spacingAndGlyphs" >13.55</text>
<rect x="810" y="116" width="29" height="11" fill="#c0c0c0" />
<text x="813.7" y="125" font-size="9.9" fill="#000" textLength="21.4" lengthAdjust="spacingAndGlyphs" >15.70</text>
<rect x="810" y="210" width="29" height="8" fill="#ff0000" />
<text x="813.7" y="219.3" font-size="9.9" fill="#000" textLength="21.4" lengthAdjust="spacingAndGlyphs" >15.05</text>
<rect x="810" y="217" width="29" height="11" fill="#ffffff" />
<text x="813.7" y="225.9" font-size="9.9" fill="#000" textLength="21.4" lengthAdjust="spacingAndGlyphs" >15.00</text>
<g clip-path="url(#c1)">
<g shape-rendering="crispEdges">
<line x1="9" y1="454.5" x2="807" y2="454.5" stroke="#3a3a3a" stroke-width="1" stroke-dasharray="3.5 2.5" />
<line x1="9" y1="456.5" x2="807" y2="456.5" stroke="#356260" stroke-width="1" stroke-dasharray="18 6" />
<line x1="9" y1="518.5" x2="807" y2="518.5" stroke="#356260" stroke-width="1" stroke-dasharray="18 6" />
<line x1="9" y1="469.5" x2="807" y2="469.5" stroke="#1a5a98" stroke-width="1" stroke-dasharray="3.5 2.5" />
<line x1="9" y1="506.5" x2="807" y2="506.5" stroke="#1a5a98" stroke-width="1" stroke-dasharray="3.5 2.5" />
<line x1="9" y1="476.5" x2="807" y2="476.5" stroke="#a0f4a0" stroke-width="1" stroke-dasharray="3.5 2.5" />
<line x1="9" y1="491.5" x2="807" y2="491.5" stroke="#3a3a3a" stroke-width="1" stroke-dasharray="3.5 2.5" />
<line x1="9" y1="514.5" x2="807" y2="514.5" stroke="#ff0000" stroke-width="1" stroke-dasharray="3.5 2.5" />
<rect x="9" y="521" width="1" height="9" fill="#00ff00" />
<rect x="17" y="521" width="1" height="9" fill="#00ff00" />
<rect x="25" y="521" width="1" height="9" fill="#00ff00" />
<rect x="33" y="521" width="1" height="9" fill="#00ff00" />
<rect x="41" y="521" width="1" height="9" fill="#00ff00" />
<rect x="49" y="521" width="1" height="9" fill="#00ff00" />
<rect x="57" y="521" width="1" height="9" fill="#00ff00" />
<rect x="65" y="521" width="1" height="9" fill="#00ff00" />
<rect x="73" y="521" width="1" height="9" fill="#00ff00" />
<rect x="81" y="521" width="1" height="9" fill="#00ff00" />
<rect x="89" y="521" width="1" height="9" fill="#00ff00" />
<rect x="97" y="521" width="1" height="9" fill="#00ff00" />
<rect x="105" y="521" width="1" height="9" fill="#00ff00" />
<rect x="113" y="521" width="1" height="9" fill="#00ff00" />
<rect x="121" y="521" width="1" height="9" fill="#00ff00" />
<rect x="129" y="521" width="1" height="9" fill="#00ff00" />
<rect x="137" y="521" width="1" height="9" fill="#00ff00" />
<rect x="145" y="521" width="1" height="9" fill="#00ff00" />
<rect x="153" y="521" width="1" height="9" fill="#00ff00" />
<rect x="161" y="521" width="1" height="9" fill="#00ff00" />
<rect x="169" y="521" width="1" height="9" fill="#00ff00" />
<rect x="177" y="521" width="1" height="9" fill="#00ff00" />
<rect x="185" y="521" width="1" height="9" fill="#00ff00" />
<rect x="193" y="521" width="1" height="9" fill="#00ff00" />
<rect x="201" y="521" width="1" height="9" fill="#00ff00" />
<rect x="209" y="521" width="1" height="9" fill="#00ff00" />
<rect x="217" y="521" width="1" height="9" fill="#00ff00" />
<rect x="225" y="521" width="1" height="9" fill="#00ff00" />
<rect x="233" y="521" width="1" height="9" fill="#00ff00" />
<rect x="241" y="521" width="1" height="9" fill="#00ff00" />
<rect x="249" y="525" width="1" height="5" fill="#00ff00" />
<rect x="257" y="525" width="1" height="5" fill="#00ff00" />
<rect x="265" y="525" width="1" height="5" fill="#00ff00" />
<rect x="273" y="529" width="1" height="4" fill="#ff0000" />
<rect x="281" y="529" width="1" height="4" fill="#ff0000" />
<rect x="289" y="529" width="1" height="4" fill="#ff0000" />
<rect x="297" y="529" width="1" height="4" fill="#ff0000" />
<rect x="305" y="529" width="1" height="4" fill="#ff0000" />
<rect x="313" y="529" width="1" height="4" fill="#ff0000" />
<rect x="321" y="525" width="1" height="5" fill="#00ff00" />
<rect x="329" y="525" width="1" height="5" fill="#00ff00" />
<rect x="337" y="525" width="1" height="5" fill="#00ff00" />
<rect x="345" y="529" width="1" height="4" fill="#ff0000" />
<rect x="353" y="529" width="1" height="4" fill="#ff0000" />
<rect x="361" y="529" width="1" height="4" fill="#ff0000" />
<rect x="369" y="529" width="1" height="4" fill="#ff0000" />
<rect x="377" y="529" width="1" height="4" fill="#ff0000" />
<rect x="385" y="521" width="1" height="9" fill="#00ff00" />
<rect x="393" y="521" width="1" height="9" fill="#00ff00" />
<rect x="401" y="521" width="1" height="9" fill="#00ff00" />
<rect x="409" y="521" width="1" height="9" fill="#00ff00" />
<rect x="417" y="521" width="1" height="9" fill="#00ff00" />
<rect x="425" y="521" width="1" height="9" fill="#00ff00" />
<rect x="433" y="521" width="1" height="9" fill="#00ff00" />
<rect x="441" y="521" width="1" height="9" fill="#00ff00" />
<rect x="449" y="521" width="1" height="9" fill="#00ff00" />
<rect x="457" y="521" width="1" height="9" fill="#00ff00" />
<rect x="465" y="525" width="1" height="5" fill="#00ff00" />
<rect x="473" y="525" width="1" height="5" fill="#00ff00" />
<rect x="481" y="529" width="1" height="4" fill="#ff0000" />
<rect x="489" y="529" width="1" height="4" fill="#ff0000" />
<rect x="497" y="529" width="1" height="4" fill="#ff0000" />
<rect x="505" y="529" width="1" height="4" fill="#ff0000" />
<rect x="513" y="529" width="1" height="4" fill="#ff0000" />
<rect x="521" y="529" width="1" height="4" fill="#ff0000" />
<rect x="529" y="529" width="1" height="4" fill="#ff0000" />
<rect x="537" y="529" width="1" height="4" fill="#ff0000" />
<rect x="545" y="529" width="1" height="4" fill="#ff0000" />
<rect x="553" y="529" width="1" height="9" fill="#ff0000" />
<rect x="561" y="529" width="1" height="9" fill="#ff0000" />
<rect x="569" y="529" width="1" height="9" fill="#ff0000" />
<rect x="577" y="529" width="1" height="9" fill="#ff0000" />
<rect x="585" y="529" width="1" height="9" fill="#ff0000" />
<rect x="593" y="529" width="1" height="9" fill="#ff0000" />
<rect x="601" y="529" width="1" height="4" fill="#ff0000" />
<rect x="609" y="529" width="1" height="4" fill="#ff0000" />
<rect x="617" y="529" width="1" height="4" fill="#ff0000" />
<rect x="625" y="525" width="1" height="5" fill="#00ff00" />
<rect x="633" y="525" width="1" height="5" fill="#00ff00" />
<rect x="8" y="526" width="3" height="3" fill="#ff00ff" />
<rect x="24" y="526" width="3" height="3" fill="#ff00ff" />
<rect x="32" y="526" width="3" height="3" fill="#ff00ff" />
<rect x="40" y="526" width="3" height="3" fill="#ff00ff" />
<rect x="48" y="526" width="3" height="3" fill="#ff00ff" />
<rect x="56" y="526" width="3" height="3" fill="#ff00ff" />
<rect x="64" y="526" width="3" height="3" fill="#ff00ff" />
<rect x="80" y="526" width="3" height="3" fill="#ff00ff" />
<rect x="192" y="526" width="3" height="3" fill="#ff00ff" />
<rect x="200" y="526" width="3" height="3" fill="#ff00ff" />
<rect x="208" y="526" width="3" height="3" fill="#ff00ff" />
<rect x="216" y="526" width="3" height="3" fill="#ff00ff" />
<rect x="232" y="526" width="3" height="3" fill="#ff00ff" />
<rect x="448" y="526" width="3" height="3" fill="#ff00ff" />
<rect x="190" y="519" width="5" height="3" fill="#ff00ff" />
<rect x="454" y="519" width="5" height="3" fill="#ff00ff" />
<rect x="240" y="529" width="3" height="3" fill="#ff00ff" />
<rect x="456" y="529" width="3" height="3" fill="#ff00ff" />
<rect x="248" y="529" width="3" height="10" fill="#ff00ff" />
<rect x="464" y="529" width="3" height="10" fill="#ff00ff" />
<rect x="600" y="520" width="3" height="9" fill="#00e5ee" />
</g>
<circle cx="120.4" cy="537.4" r="2.6" fill="#00e5ee"/>
<circle cx="384.5" cy="537.4" r="2.6" fill="#00e5ee"/>
<circle cx="616.4" cy="537.4" r="2.6" fill="#00e5ee"/>
<polyline points="9.4,457.6 47.0,460.0 70.4,462.3 105.6,463.5 140.8,462.8 200.0,462.4 227.0,462.7 254.0,465.9 296.0,477.0 328.0,481.9 362.5,486.0 377.3,486.0 400.0,483.1 414.6,479.4 434.4,475.2 446.7,473.3 461.5,473.3 476.3,476.5 500.9,480.7 537.9,489.3 562.5,494.2 589.7,498.4 608.5,497.8 623.8,498.5 633.0,496.0" fill="none" stroke="#1e90ff" stroke-width="1.15" />
<polyline points="9.4,463.0 37.6,463.5 56.3,467.7 79.8,469.3 91.5,468.9 105.6,464.6 126.8,462.3 150.2,461.1 187.8,460.7 200.0,463.0 227.0,463.4 241.8,470.8 259.0,485.6 273.8,493.0 296.0,499.2 320.6,489.3 337.9,489.3 345.3,493.0 355.0,493.0 361.3,495.5 374.9,491.8 378.6,488.0 384.7,474.5 392.0,468.3 399.9,464.6 414.6,462.2 429.4,460.2 441.8,460.2 454.1,469.6 464.0,478.2 473.8,488.0 483.7,492.3 503.4,500.4 518.2,503.6 530.5,503.6 550.2,506.6 560.0,508.5 577.3,507.8 592.0,508.5 600.8,506.2 619.2,492.9 633.0,486.2" fill="none" stroke="#ff00ff" stroke-width="1.1" />
</g>
<text x="12.9" y="459" font-size="9.9" fill="#ffffff" textLength="241.7" lengthAdjust="spacingAndGlyphs" >VIETHUNGSS-RS MA[0](14)(21) 56.8020 6.0000 42.9945</text>
<g clip-path="url(#clip100)">
<text x="812" y="451.5" font-size="9.9" fill="#fff" textLength="15" lengthAdjust="spacingAndGlyphs" >100</text>
</g>
<rect x="810" y="450" width="29" height="11" fill="#2f4f4f" />
<text x="813.7" y="459" font-size="9.9" fill="#000" textLength="21.4" lengthAdjust="spacingAndGlyphs" >97.32</text>
<rect x="810" y="471" width="29" height="11" fill="#90ee90" />
<text x="813.7" y="480" font-size="9.9" fill="#000" textLength="21.4" lengthAdjust="spacingAndGlyphs" >70.00</text>
<rect x="810" y="463" width="29" height="11" fill="#104e8b" />
<text x="813.7" y="472" font-size="9.9" fill="#000" textLength="21.4" lengthAdjust="spacingAndGlyphs" >80.00</text>
<text x="811.5" y="494.4" font-size="9.9" fill="#fff" textLength="10" lengthAdjust="spacingAndGlyphs" >50</text>
<rect x="810" y="500" width="29" height="11" fill="#104e8b" />
<text x="813.7" y="509" font-size="9.9" fill="#000" textLength="21.4" lengthAdjust="spacingAndGlyphs" >30.00</text>
<rect x="810" y="511" width="29" height="1" fill="#ff0000" />
<rect x="810" y="512" width="29" height="11" fill="#2f4f4f" />
<text x="813.7" y="521.3" font-size="9.9" fill="#000" textLength="21.4" lengthAdjust="spacingAndGlyphs" >14.09</text>
<text x="811" y="531.8" font-size="9.9" fill="#fff" textLength="17" lengthAdjust="spacingAndGlyphs" >0.00</text>
<text x="811" y="540.8" font-size="9.9" fill="#fff" textLength="12.5" lengthAdjust="spacingAndGlyphs" >-20</text>
<rect x="808" y="529" width="2" height="1" fill="#fff" />
<rect x="808" y="543" width="2" height="1" fill="#fff" />
<rect x="808" y="548" width="2" height="1" fill="#fff" />
<g clip-path="url(#c2)">
<g shape-rendering="crispEdges">
<line x1="9" y1="581.5" x2="807" y2="581.5" stroke="#c8c8c8" stroke-width="1" stroke-dasharray="3.2 2.6" />
<line x1="9" y1="627.5" x2="807" y2="627.5" stroke="#c8c8c8" stroke-width="1" stroke-dasharray="3.2 2.6" />
<line x1="9" y1="604.5" x2="807" y2="604.5" stroke="#009090" stroke-width="1" stroke-dasharray="3.2 2.6" />
</g>
<polyline points="9.5,598.8 17.5,593.8 35.0,595.5 50.0,601.2 58.8,600.0 65.0,598.2 73.0,593.8 81.2,601.2 90.0,596.2 106.2,580.0 113.8,580.0 122.0,586.2 128.8,583.2 146.2,592.5 152.5,589.2 165.0,589.2 168.8,588.2 177.5,588.2 185.0,592.5 193.8,601.2 201.2,598.2 210.0,599.5 218.8,598.2 225.0,596.2 232.5,605.0 241.2,607.5 257.5,618.2 272.5,618.2 281.2,614.2 286.2,615.0 297.5,615.0 305.0,595.5 310.0,594.2 316.2,594.2 321.2,595.5 330.0,603.8 337.5,604.5 345.5,614.2 353.0,605.5 361.2,608.8 369.5,600.0 377.0,601.2 385.0,571.8 390.0,570.2 401.2,570.2 410.0,578.8 413.0,577.0 418.6,577.9 425.6,587.2 433.2,582.7 441.0,591.9 449.5,607.4 457.9,613.5 464.9,612.4 473.3,623.4 488.7,611.6 497.7,616.4 511.2,613.8 522.4,608.8 528.0,609.3 536.4,612.1 553.3,615.2 568.7,607.4 578.5,607.4 584.1,608.2 592.5,608.2 600.9,604.0 609.4,594.7 616.4,591.4 624.8,592.5 632.6,589.4" fill="none" stroke="#1e90ff" stroke-width="1.15" />
</g>
<text x="12.5" y="560" font-size="9.9" fill="#ffffff" textLength="67.5" lengthAdjust="spacingAndGlyphs" >RSI(14) 62.9723</text>
<text x="811.5" y="557" font-size="9.9" fill="#fff" textLength="15" lengthAdjust="spacingAndGlyphs" >100</text>
<text x="811.5" y="583.7" font-size="9.9" fill="#fff" textLength="10" lengthAdjust="spacingAndGlyphs" >70</text>
<rect x="810" y="598" width="29" height="11" fill="#008b8b" />
<text x="813.7" y="607" font-size="9.9" fill="#000" textLength="21.4" lengthAdjust="spacingAndGlyphs" >50.00</text>
<text x="811.5" y="629.7" font-size="9.9" fill="#fff" textLength="10" lengthAdjust="spacingAndGlyphs" >30</text>
<text x="811.5" y="657.5" font-size="9.9" fill="#fff" textLength="5" lengthAdjust="spacingAndGlyphs" >0</text>
<g shape-rendering="crispEdges">
<rect x="808" y="581" width="2" height="1" fill="#fff" />
<rect x="808" y="604" width="2" height="1" fill="#fff" />
<rect x="808" y="627" width="2" height="1" fill="#fff" />
<rect x="9" y="662" width="1" height="3" fill="#fff" />
<rect x="73" y="662" width="1" height="3" fill="#fff" />
<rect x="137" y="662" width="1" height="3" fill="#fff" />
<rect x="201" y="662" width="1" height="3" fill="#fff" />
<rect x="265" y="662" width="1" height="3" fill="#fff" />
<rect x="329" y="662" width="1" height="3" fill="#fff" />
<rect x="393" y="662" width="1" height="3" fill="#fff" />
<rect x="457" y="662" width="1" height="3" fill="#fff" />
<rect x="521" y="662" width="1" height="3" fill="#fff" />
<rect x="585" y="662" width="1" height="3" fill="#fff" />
</g>
<text x="8.75" y="674" font-size="9.9" fill="#ffffff" textLength="45" lengthAdjust="spacingAndGlyphs" >13 Jul 2009</text>
<text x="72.68" y="674" font-size="9.9" fill="#ffffff" textLength="48.6" lengthAdjust="spacingAndGlyphs" >13 Jul 12:45</text>
<text x="136.61" y="674" font-size="9.9" fill="#ffffff" textLength="48.6" lengthAdjust="spacingAndGlyphs" >13 Jul 13:25</text>
<text x="200.54" y="674" font-size="9.9" fill="#ffffff" textLength="48.6" lengthAdjust="spacingAndGlyphs" >13 Jul 14:05</text>
<text x="264.47" y="674" font-size="9.9" fill="#ffffff" textLength="48.6" lengthAdjust="spacingAndGlyphs" >13 Jul 14:45</text>
<text x="328.4" y="674" font-size="9.9" fill="#ffffff" textLength="48.6" lengthAdjust="spacingAndGlyphs" >13 Jul 15:25</text>
<text x="392.33" y="674" font-size="9.9" fill="#ffffff" textLength="48.6" lengthAdjust="spacingAndGlyphs" >14 Jul 09:35</text>
<text x="456.26" y="674" font-size="9.9" fill="#ffffff" textLength="48.6" lengthAdjust="spacingAndGlyphs" >14 Jul 10:15</text>
<text x="520.19" y="674" font-size="9.9" fill="#ffffff" textLength="48.6" lengthAdjust="spacingAndGlyphs" >14 Jul 10:55</text>
<text x="584.12" y="674" font-size="9.9" fill="#ffffff" textLength="48.6" lengthAdjust="spacingAndGlyphs" >14 Jul 11:35</text>
</svg></body></html>
